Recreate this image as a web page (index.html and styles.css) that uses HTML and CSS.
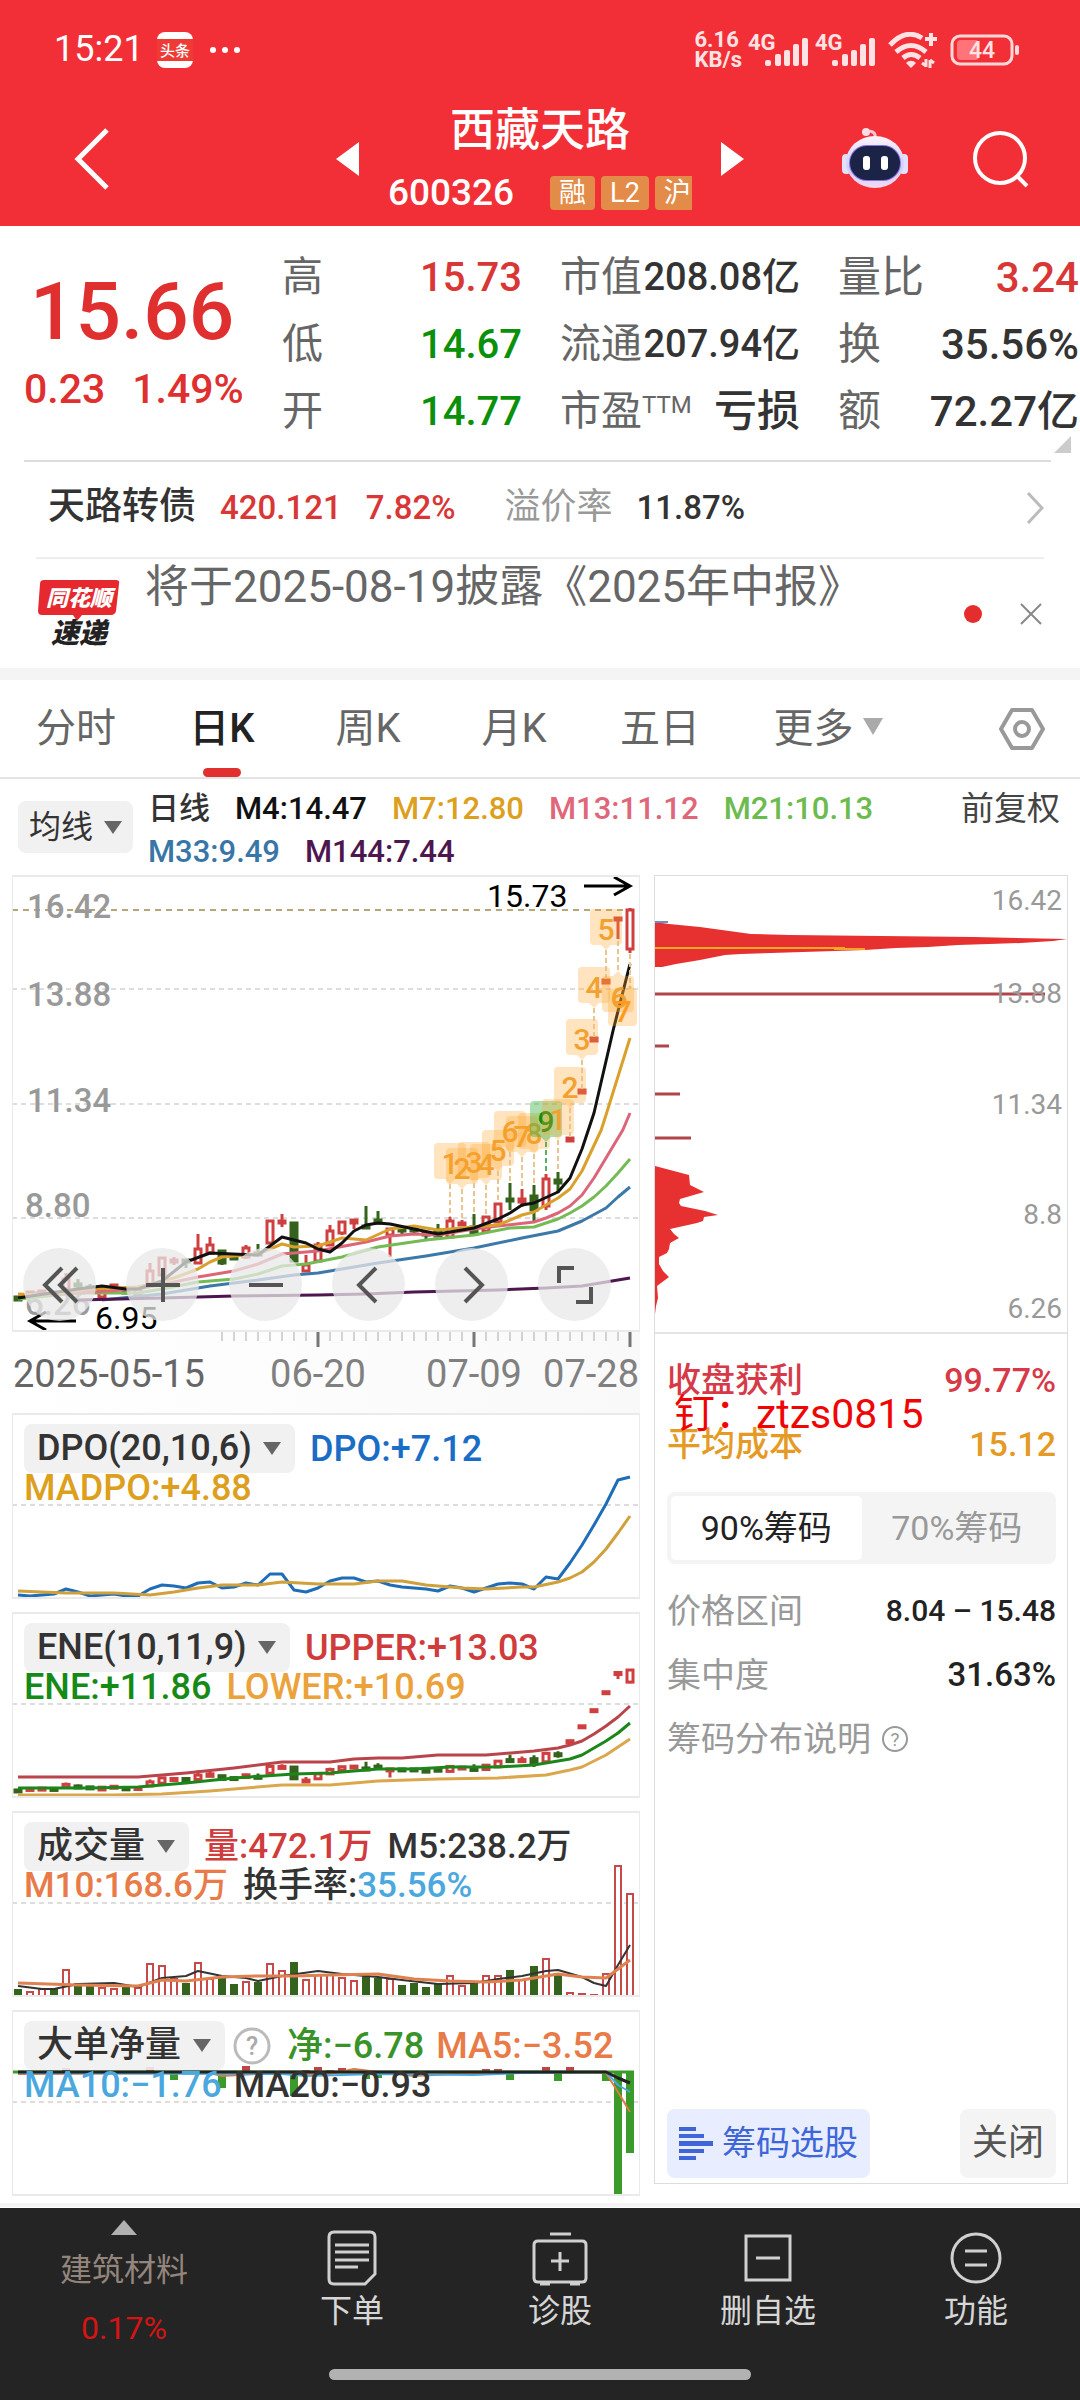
FILE: index.html
```html
<!DOCTYPE html>
<html lang="zh-CN">
<head>
    <meta charset="UTF-8">
    <meta name="viewport" content="width=device-width, initial-scale=1.0">
    <title>西藏天路 600326</title>
    <link rel="stylesheet" href="styles.css">
</head>
<body>
    <header class="header">
        <div class="status-bar">
            <span class="clock">15:21</span>
            <svg class="news-app" viewBox="0 0 36 36" width="36" height="36">
                <rect width="36" height="36" rx="8" fill="#fff"/>
                <rect y="7" width="36" height="22" fill="#ee3b36"/>
                <text x="18" y="24" text-anchor="middle" font-size="15" font-weight="500" fill="#fff">头条</text>
            </svg>
            <svg viewBox="0 0 32 8" width="32" height="8" fill="#fff">
                <circle cx="4" cy="4" r="3"/><circle cx="16" cy="4" r="3"/><circle cx="28" cy="4" r="3"/>
            </svg>
            <div class="status-icons">
                <span class="net-speed">6.16<br>KB/s</span>
                <svg viewBox="0 0 61 34" width="61" height="34" fill="#ffe3e4">
                    <text x="0" y="17" font-size="22" font-weight="700">4G</text>
                    <rect x="17" y="27" width="6" height="6" rx="2"/><rect x="27" y="21" width="6" height="12" rx="2"/><rect x="36" y="17" width="6" height="16" rx="2"/><rect x="45" y="11" width="6" height="22" rx="2"/><rect x="54" y="5" width="6" height="28" rx="2"/>
                </svg>
                <svg viewBox="0 0 61 34" width="61" height="34" fill="#ffe3e4">
                    <text x="0" y="17" font-size="22" font-weight="700">4G</text>
                    <rect x="17" y="27" width="6" height="6" rx="2"/><rect x="27" y="21" width="6" height="12" rx="2"/><rect x="36" y="17" width="6" height="16" rx="2"/><rect x="45" y="11" width="6" height="22" rx="2"/><rect x="54" y="5" width="6" height="28" rx="2"/>
                </svg>
                <svg class="wifi" viewBox="0 0 50 36" width="50" height="36" fill="none" stroke="#ffe3e4" stroke-width="5">
                    <path d="M2 13Q18-4 34 6M8 20Q23 7 38 20M15 26Q23 19 32 26"/>
                    <path d="M18 31a6 5 0 0 1 10 0l-5 5z" fill="#ffe3e4" stroke="none"/>
                    <path d="M43 1v13M37 7h12" stroke-width="4"/>
                    <path d="M38 27v8M38 34l-4-3M42 36V28M42 28l4 3" stroke-width="3"/>
                </svg>
                <svg viewBox="0 0 70 32" width="70" height="32">
                    <rect x="2" y="2" width="60" height="28" rx="8" fill="none" stroke="#ffd9da" stroke-width="3"/>
                    <rect x="7" y="6" width="22" height="20" rx="4" fill="#ff7379"/>
                    <rect x="65" y="11" width="4" height="10" rx="2" fill="#ffd9da"/>
                    <text x="32" y="24" text-anchor="middle" font-size="23" font-weight="500" fill="#ffe3e4">44</text>
                </svg>
            </div>
        </div>
        <div class="title-bar">
            <div class="title-left">
                <button class="icon-btn" aria-label="返回">
                    <svg viewBox="0 0 36 62" width="36" height="62" fill="none" stroke="#fff" stroke-width="5"><path d="M33 2L4 31l29 29"/></svg>
                </button>
                <button class="icon-btn" aria-label="上一只">
                    <svg viewBox="0 0 23 34" width="23" height="34" fill="#fff"><path d="M23 0v34L0 17z"/></svg>
                </button>
            </div>
            <div class="title-center">
                <h1>西藏天路</h1>
                <div class="code-row">
                    <span class="code">600326</span>
                    <span class="tags"><span class="tag">融</span><span class="tag">L2</span><span class="tag">沪</span></span>
                </div>
            </div>
            <div class="title-right">
                <button class="icon-btn" aria-label="下一只">
                    <svg viewBox="0 0 23 34" width="23" height="34" fill="#fff"><path d="M0 0v34l23-17z"/></svg>
                </button>
                <button class="icon-btn robot" aria-label="智能助手">
                    <svg viewBox="0 0 66 62" width="66" height="62">
                        <defs>
                            <linearGradient id="head" x1="0" y1="0" x2="0" y2="1">
                                <stop offset="0" stop-color="#fdf3fb"/><stop offset="0.6" stop-color="#cfcff8"/><stop offset="1" stop-color="#f3d9f0"/>
                            </linearGradient>
                        </defs>
                        <path d="M33 10c1-5-2-7-8-7" fill="none" stroke="#f6c9d8" stroke-width="3"/><circle cx="24" cy="4" r="4" fill="#fbdde6"/>
                        <rect x="0" y="26" width="9" height="20" rx="4" fill="#e3e0fb"/><rect x="57" y="26" width="9" height="20" rx="4" fill="#e3e0fb"/>
                        <ellipse cx="33" cy="34" rx="29" ry="26" fill="url(#head)"/>
                        <rect x="7" y="17" width="52" height="36" rx="18" fill="#8470e8"/>
                        <rect x="8" y="18" width="50" height="34" rx="17" fill="#1b2346"/>
                        <rect x="21" y="28" width="7" height="14" rx="3" fill="#fff"/><rect x="39" y="28" width="7" height="14" rx="3" fill="#fff"/>
                    </svg>
                </button>
                <button class="icon-btn" aria-label="搜索">
                    <svg viewBox="0 0 58 58" width="58" height="58" fill="none" stroke="#fff" stroke-width="4"><circle cx="28" cy="28" r="25"/><path d="M45 46l10 10"/></svg>
                </button>
            </div>
        </div>
    </header>

    <main>
        <section class="quote">
            <div class="quote-price">
                <strong>15.66</strong>
                <p><span>0.23</span><span>1.49%</span></p>
            </div>
            <dl class="quote-col">
                <div><dt>高</dt><dd class="up">15.73</dd></div>
                <div><dt>低</dt><dd class="down">14.67</dd></div>
                <div><dt>开</dt><dd class="down">14.77</dd></div>
            </dl>
            <dl class="quote-col mid">
                <div><dt>市值</dt><dd>208.08亿</dd></div>
                <div><dt>流通</dt><dd>207.94亿</dd></div>
                <div><dt>市盈<sup>TTM</sup></dt><dd class="loss">亏损</dd></div>
            </dl>
            <dl class="quote-col last">
                <div><dt>量比</dt><dd class="up">3.24</dd></div>
                <div><dt>换</dt><dd>35.56%</dd></div>
                <div><dt>额</dt><dd>72.27亿</dd></div>
            </dl>
            <span class="quote-corner"></span>
        </section>

        <a class="bond" href="#">
            <span class="bond-name">天路转债</span>
            <span class="up">420.121</span>
            <span class="up">7.82%</span>
            <span class="bond-label">溢价率</span>
            <span>11.87%</span>
            <svg viewBox="0 0 18 34" width="18" height="34" fill="none" stroke="#bbb" stroke-width="3"><path d="M2 2l14 15L2 32"/></svg>
        </a>

        <section class="notice">
            <svg class="notice-logo" viewBox="0 0 82 68" width="82" height="68">
                <path d="M6 0h72q4 0 3 4l-3 27q-1 4-5 4H44l-5 6-4-6H4q-4 0-4-4L2 4q0-4 4-4z" fill="#e5292f"/>
                <text x="41" y="26" text-anchor="middle" font-size="22" font-weight="900" font-style="italic" fill="#fff">同花顺</text>
                <text x="41" y="63" text-anchor="middle" font-size="28" font-weight="900" font-style="italic" fill="#222">速递</text>
            </svg>
            <p>将于2025-08-19披露《2025年中报》</p>
            <span class="dot"></span>
            <button class="icon-btn" aria-label="关闭公告">
                <svg viewBox="0 0 22 22" width="22" height="22" stroke="#888" stroke-width="2"><path d="M1 1l20 20M21 1L1 21"/></svg>
            </button>
        </section>

        <nav class="tabs">
            <button>分时</button>
            <button class="active">日K</button>
            <button>周K</button>
            <button>月K</button>
            <button>五日</button>
            <button>更多<i class="caret"></i></button>
            <button class="settings" aria-label="设置">
                <svg viewBox="0 0 46 44" width="46" height="44" fill="none" stroke="#999" stroke-width="4"><path d="M13 3h20l11 19-11 19H13L2 22z" stroke-linejoin="round"/><circle cx="23" cy="22" r="7"/></svg>
            </button>
        </nav>

        <section class="ma-bar">
            <span class="picker"><select aria-label="主图指标"><option>均线</option></select></span>
            <div class="ma-legend">
                <span class="c-dark">日线</span>
                <span class="c-black">M4:14.47</span>
                <span class="c-gold">M7:12.80</span>
                <span class="c-pink">M13:11.12</span>
                <span class="c-lime">M21:10.13</span>
                <span class="c-blue">M33:9.49</span>
                <span class="c-purple">M144:7.44</span>
            </div>
            <a class="adjust" href="#">前复权</a>
        </section>

        <div class="board">
            <div class="charts">
                <section class="panel">
                    <svg id="kline" class="chart" viewBox="1 2 626 453">
                        <path d="M0 114h628M0 229h628M0 343h628" class="grid-line"/>
                        <path d="M0 35h628" stroke="#b5a67c" stroke-width="2" stroke-dasharray="6 5"/>
                        <g class="axis">
                            <text x="15" y="43">16.42</text>
                            <text x="15" y="131">13.88</text>
                            <text x="15" y="237">11.34</text>
                            <text x="13" y="342">8.80</text>
                            <text x="13" y="440">6.26</text>
                        </g>
                        <g class="extreme">
                            <text x="475" y="32">15.73</text>
                            <path d="M572 11h45M602 2l16 9-16 9"/>
                            <text x="83" y="454">6.95</text>
                            <path d="M64 446H18M34 437l-16 9 16 9"/>
                        </g>
                    </svg>
                    <div class="tools">
                        <button aria-label="最早"><svg viewBox="0 0 40 40" width="40" height="40"><path d="M22 3L5 20l17 17M37 3L20 20l17 17"/></svg></button>
                        <button aria-label="放大"><svg viewBox="0 0 40 40" width="40" height="40"><path d="M20 3v34M3 20h34"/></svg></button>
                        <button aria-label="缩小"><svg viewBox="0 0 40 40" width="40" height="40"><path d="M3 20h34"/></svg></button>
                        <button aria-label="左移"><svg viewBox="0 0 40 40" width="40" height="40"><path d="M27 3L10 20l17 17"/></svg></button>
                        <button aria-label="右移"><svg viewBox="0 0 40 40" width="40" height="40"><path d="M13 3l17 17-17 17"/></svg></button>
                        <button aria-label="全屏"><svg viewBox="0 0 40 40" width="40" height="40"><path d="M4 18V3h15M36 22v15H21"/></svg></button>
                    </div>
                </section>

                <svg id="dates" class="dates" viewBox="0 0 628 81">
                    <g font-size="38">
                        <text x="1" y="55" fill="#666">2025-05-15</text>
                        <text x="306" y="55" text-anchor="middle">06-20</text>
                        <text x="462" y="55" text-anchor="middle">07-09</text>
                        <text x="627" y="55" text-anchor="end">07-28</text>
                    </g>
                </svg>

                <section class="panel">
                    <svg id="dpo" class="chart" viewBox="1 2 626 182"><path d="M0 92h628" class="grid-line"/></svg>
                    <div class="legend">
                        <span class="picker"><select aria-label="副图指标一"><option>DPO(20,10,6)</option></select></span>
                        <span class="c-dpo">DPO:+7.12</span>
                        <i class="break"></i>
                        <span class="c-gold">MADPO:+4.88</span>
                    </div>
                </section>

                <section class="panel">
                    <svg id="ene" class="chart" viewBox="1 2 626 182"><path d="M0 92h628" class="grid-line"/></svg>
                    <div class="legend">
                        <span class="picker"><select aria-label="副图指标二"><option>ENE(10,11,9)</option></select></span>
                        <span class="c-red">UPPER:+13.03</span>
                        <i class="break"></i>
                        <span class="c-green">ENE:+11.86</span>
                        <span class="c-amber">LOWER:+10.69</span>
                    </div>
                </section>

                <section class="panel">
                    <svg id="volume" class="chart" viewBox="1 2 626 182"><path d="M0 92h628" class="grid-line"/></svg>
                    <div class="legend volume-legend">
                        <span class="picker"><select aria-label="副图指标三"><option>成交量</option></select></span>
                        <span class="c-red">量:472.1万</span>
                        <span class="c-dark">M5:238.2万</span>
                        <i class="break"></i>
                        <span class="c-orange">M10:168.6万</span>
                        <span class="c-dark">换手率:<b class="c-sky">35.56%</b></span>
                    </div>
                </section>

                <section class="panel">
                    <svg id="netflow" class="chart" viewBox="1 2 626 182"><path d="M0 92h628" class="grid-line"/></svg>
                    <div class="legend tight">
                        <span class="picker"><select aria-label="副图指标四"><option>大单净量</option></select></span>
                        <button class="icon-btn help" aria-label="说明">
                            <svg viewBox="0 0 38 38" width="38" height="38"><circle cx="19" cy="19" r="17" fill="none" stroke="#bbb" stroke-width="3"/><text x="19" y="28" text-anchor="middle" font-size="25" fill="#aaa">?</text></svg>
                        </button>
                        <span class="c-leaf">净:−6.78</span>
                        <span class="c-orange">MA5:−3.52</span>
                        <i class="break"></i>
                        <span class="c-sky">MA10:−1.76</span>
                        <span class="c-dark">MA20:−0.93</span>
                    </div>
                </section>
            </div>

            <aside class="chips">
                <svg class="chip-chart" viewBox="0 0 412 456">
                    <path fill="#e73030" d="M0 46L14 48 45 51 96 58 134 59 226 60 319 61 412 63 398 65 366 67 334 68 303 69 273 71 241 72 210 74 180 75 148 76 116 77 86 78 70 79 45 84 21 88 7 91H0z"/>
                    <path fill="#e73030" d="M0 290L34 299 35 309 49 316 25 323 24 327 26 330 50 335 63 339 49 341 48 345 42 347 15 353 19 358 24 362 15 367 14 373 12 377 4 381 4 388 8 395 14 401 6 407 2 410 3 422 1 430 0 438z"/>
                    <path d="M0 46h13" stroke="#6a8fc8" stroke-width="2"/>
                    <path d="M0 72h190M179 73h31" stroke="#f5a623" stroke-width="2"/>
                    <path d="M0 118h390M0 170h14M0 218h25M0 262h36" stroke="#b0464b" stroke-width="3"/>
                    <g font-size="28" fill="#999" text-anchor="end">
                        <text x="407" y="34">16.42</text>
                        <text x="407" y="127">13.88</text>
                        <text x="407" y="238">11.34</text>
                        <text x="407" y="348">8.8</text>
                        <text x="407" y="442">6.26</text>
                    </g>
                </svg>
                <div class="chip-info">
                    <div class="chip-row c-crimson"><span>收盘获利</span><span>99.77%</span></div>
                    <div class="chip-row c-cost"><span>平均成本</span><span>15.12</span></div>
                    <span class="watermark">钉：ztzs0815</span>
                    <div class="switch">
                        <button class="active">90%筹码</button>
                        <button>70%筹码</button>
                    </div>
                    <div class="chip-row"><span>价格区间</span><b class="range">8.04 – 15.48</b></div>
                    <div class="chip-row"><span>集中度</span><b>31.63%</b></div>
                    <a class="chip-help" href="#">筹码分布说明
                        <svg viewBox="0 0 28 28" width="28" height="28"><circle cx="14" cy="14" r="12" fill="none" stroke="#999" stroke-width="2"/><text x="14" y="21" text-anchor="middle" font-size="19" fill="#999">?</text></svg>
                    </a>
                </div>
                <div class="chip-actions">
                    <button class="pick">
                        <svg viewBox="0 0 34 34" width="34" height="34" fill="#3f66d8"><path d="M0 0h17v4H0zM0 7h25v4H0zM0 14h34v5H0zM0 22h25v4H0zM0 29h17v4H0z"/></svg>
                        筹码选股
                    </button>
                    <button class="close">关闭</button>
                </div>
            </aside>
        </div>
    </main>

    <footer class="footer">
        <nav>
            <a class="industry" href="#"><i></i><span>建筑材料</span><em>0.17%</em></a>
            <a href="#">
                <svg viewBox="0 0 56 56" width="56" height="56"><path d="M10 2h36q5 0 5 5v37L41 54H10q-5 0-5-5V7q0-5 5-5zM11 15h34M11 22h34M11 30h34M11 37h23"/></svg>
                下单
            </a>
            <a href="#">
                <svg viewBox="0 0 56 56" width="56" height="56"><path d="M6 11h44q4 0 4 4v33q0 4-4 4H6q-4 0-4-4V15q0-4 4-4zM18 4h21M28 22v19M19 31h18M8 54h10M38 54h10"/></svg>
                诊股
            </a>
            <a href="#">
                <svg viewBox="0 0 56 56" width="56" height="56"><path d="M6 6h44v44H6zM16 28h24"/></svg>
                删自选
            </a>
            <a href="#">
                <svg viewBox="0 0 56 56" width="56" height="56"><circle cx="28" cy="28" r="24"/><path d="M17 21h22M17 35h22"/></svg>
                功能
            </a>
        </nav>
        <span class="home-bar"></span>
    </footer>

    <script src="chart.js"></script>
</body>
</html>
```
FILE: styles.css
```css
* {
    box-sizing: border-box;
}
body {
    margin: 0;
    background: #fff;
    color: #333;
    font-family: Roboto, "Noto Sans CJK SC", sans-serif;
    font-size: 34px;
    line-height: 1.2;
    min-height: 100vh;
    display: flex;
    flex-direction: column;
}
main {
    flex: 1;
}
h1, p, dl, dd {
    margin: 0;
}
a {
    color: inherit;
    text-decoration: none;
}
button, select {
    font: inherit;
    color: inherit;
    background: none;
    border: none;
    padding: 0;
    cursor: pointer;
}
svg {
    display: block;
}
.icon-btn {
    display: flex;
}
.up {
    color: #d93636;
}
.down {
    color: #0a900a;
}

/* header */
.header {
    background: #f22f37;
    color: #fff;
}
.status-bar {
    display: flex;
    align-items: center;
    height: 100px;
    padding: 0 60px 0 54px;
}
.clock {
    font-size: 36px;
    font-weight: 400;
}
.news-app {
    margin: 0 16px 0 13px;
}
.status-icons {
    display: flex;
    align-items: center;
    gap: 6px;
    margin-left: auto;
}
.wifi {
    margin: 0 6px;
}
.net-speed {
    font-size: 22px;
    line-height: 20px;
    font-weight: 700;
    color: #ffe3e4;
}
.title-bar {
    display: grid;
    grid-template-columns: 1fr 362px 1fr;
    height: 126px;
}
.title-left, .title-right {
    display: flex;
    align-items: center;
    justify-content: space-between;
    padding-bottom: 8px;
}
.title-left {
    padding-left: 74px;
}
.title-right {
    padding-right: 50px;
}
.robot {
    margin-left: 34px;
}
.title-center {
    display: flex;
    flex-direction: column;
    align-items: center;
}
h1 {
    font-size: 45px;
    font-weight: 500;
    line-height: 62px;
}
.code-row {
    display: flex;
    align-items: center;
    gap: 36px;
    margin-top: 11px;
}
.code {
    font-size: 37px;
    font-weight: 500;
    line-height: 40px;
}
.tags {
    display: flex;
    gap: 6px;
    width: 142px;
    overflow: hidden;
}
.tag {
    flex: none;
    background: #e38c49;
    border-radius: 4px;
    padding: 0 9px;
    font-size: 27px;
    line-height: 34px;
}

/* quote */
.quote {
    position: relative;
    display: flex;
    height: 236px;
    padding: 18px 0 0 24px;
    font-weight: 500;
}
.quote::after {
    content: "";
    position: absolute;
    left: 24px;
    right: 29px;
    bottom: 0;
    border-bottom: 2px solid #ddd;
}
.quote-price {
    width: 258px;
    padding-top: 22px;
    color: #e02f2f;
}
.quote-price strong {
    display: block;
    margin-left: 6px;
    font-size: 80px;
    font-weight: 500;
    line-height: 92px;
}
.quote-price p {
    display: flex;
    gap: 27px;
    font-size: 41px;
    line-height: 62px;
}
.quote-col {
    width: 240px;
    margin-right: 38px;
}
.quote-col.last {
    flex: 1;
    margin-right: 1px;
}
.quote-col div {
    display: flex;
    justify-content: space-between;
    line-height: 67px;
    white-space: nowrap;
}
.quote-col dt {
    font-size: 41px;
    font-weight: 400;
    color: #666;
}
.quote-col dd {
    font-size: 40px;
}
.quote-col.mid dd {
    font-size: 38px;
}
.quote-col.mid .loss {
    font-size: 43px;
}
.quote-col.last dt {
    font-size: 43px;
}
.quote-col.last dd {
    font-size: 42px;
}
.quote-col sup {
    font-size: 24px;
    line-height: 24px;
    vertical-align: 12px;
}
.quote-corner {
    position: absolute;
    right: 9px;
    bottom: 9px;
    border-left: 17px solid transparent;
    border-bottom: 17px solid #ccc;
}

/* bond and notice */
.bond {
    display: flex;
    align-items: center;
    gap: 24px;
    height: 97px;
    margin: 0 36px;
    padding: 0 0 4px 12px;
    border-bottom: 2px solid #eee;
    font-size: 33px;
    font-weight: 500;
}
.bond-name {
    font-size: 37px;
}
.bond-label {
    margin-left: 25px;
    font-size: 36px;
    font-weight: 400;
    color: #999;
}
.bond svg {
    margin-left: auto;
}
.notice {
    display: flex;
    align-items: center;
    height: 121px;
    padding: 0 38px;
    border-bottom: 12px solid #f4f4f4;
}
.notice p {
    flex: 1;
    margin-left: 25px;
    padding-bottom: 54px;
    font-size: 44px;
    line-height: 54px;
    white-space: nowrap;
    color: #666;
}
.dot {
    width: 18px;
    height: 18px;
    margin-right: 38px;
    border-radius: 50%;
    background: #e62d2d;
}

/* tabs */
.tabs {
    display: flex;
    height: 99px;
    padding: 0 35px 0 3px;
    border-bottom: 2px solid #e4e4e4;
}
.tabs button {
    position: relative;
    width: 146px;
    font-size: 40px;
    color: #666;
}
.tabs .active {
    font-weight: 500;
    color: #222;
}
.tabs .active::after {
    content: "";
    position: absolute;
    left: 54px;
    right: 54px;
    bottom: 0;
    height: 9px;
    border-radius: 5px;
    background: #e13030;
}
.tabs button:nth-child(6) {
    width: 190px;
}
.caret {
    display: inline-block;
    margin: 0 0 7px 9px;
    border: 10px solid transparent;
    border-top: 17px solid #aaa;
    border-bottom: none;
}
.tabs .settings {
    display: flex;
    align-items: center;
    justify-content: flex-end;
    width: auto;
    margin-left: auto;
}

/* moving average bar */
.ma-bar {
    display: flex;
    align-items: flex-start;
    height: 96px;
    padding: 8px 20px 0 18px;
    font-size: 32px;
    line-height: 43px;
}
.picker {
    position: relative;
    display: inline-flex;
    border-radius: 8px;
    background: rgba(240, 240, 240, 0.9);
}
.picker select {
    appearance: none;
    padding: 0 43px 0 13px;
    height: 49px;
    line-height: 49px;
    color: #333;
}
.picker::after {
    content: "";
    position: absolute;
    right: 14px;
    top: 18px;
    border: 9px solid transparent;
    border-top: 13px solid #666;
    border-bottom: none;
    pointer-events: none;
}
.ma-bar .picker {
    margin-top: 14px;
}
.ma-bar .picker::after {
    right: 11px;
    top: 20px;
}
.ma-bar .picker select {
    padding: 0 39px 0 11px;
    height: 52px;
}
.ma-legend {
    flex: 1;
    display: flex;
    flex-wrap: wrap;
    column-gap: 25px;
    margin: 0 60px 0 15px;
    font-size: 31px;
    font-weight: 500;
}
.adjust {
    font-size: 33px;
    color: #444;
}
.c-dark { color: #333; }
.c-black { color: #111; }
.c-gold { color: #dd9f1e; }
.c-pink { color: #e0667a; }
.c-lime { color: #6cbb4e; }
.c-blue { color: #3776a6; }
.c-purple { color: #4d164f; }
.c-dpo { color: #1a6dc6; }
.c-red { color: #d03b3b; }
.c-green { color: #168a16; }
.c-amber { color: #eba23a; }
.c-orange { color: #e87b48; }
.c-sky { color: #4ba8de; }
.c-leaf { color: #3a9329; }

/* board */
.board {
    display: grid;
    grid-template-columns: 628fr 414fr;
    gap: 14px;
    padding: 0 12px 7px;
    border-bottom: 4px solid #f4f4f4;
}
.panel {
    position: relative;
    margin-bottom: 13px;
    border: 2px solid #eaeaea;
    border-width: 2px 1px;
}
.panel:first-child, .panel:last-child {
    margin-bottom: 0;
}
.chart, .dates, .chip-chart {
    width: 100%;
    height: auto;
}
.grid-line {
    stroke: #ddd;
    stroke-width: 2;
    stroke-dasharray: 5 4;
}
.axis {
    font-size: 33px;
    font-weight: 500;
    fill: #999;
}
.extreme {
    font-size: 32px;
    fill: #000;
}
.extreme path {
    fill: none;
    stroke: #000;
    stroke-width: 3;
}
.tools {
    position: absolute;
    left: 10px;
    right: 28px;
    bottom: 9px;
    display: flex;
    justify-content: space-between;
}
.tools button {
    display: flex;
    align-items: center;
    justify-content: center;
    width: 73px;
    height: 73px;
    border-radius: 50%;
    background: rgba(232, 232, 232, 0.75);
}
.tools svg {
    fill: none;
    stroke: #555;
    stroke-width: 4;
}
.dates {
    background: linear-gradient(90deg, #fff, #f9f9f9);
    fill: #808080;
}
.legend {
    position: absolute;
    left: 11px;
    top: 9px;
    right: 0;
    display: flex;
    flex-wrap: wrap;
    align-items: center;
    column-gap: 15px;
    font-size: 36px;
    font-weight: 500;
    line-height: 30px;
}
.volume-legend > .c-red, .volume-legend > .c-dark, .volume-legend > .c-orange {
    font-size: 35px;
}
.legend.tight {
    column-gap: 12px;
}
.legend b {
    font-weight: 500;
}
.break {
    width: 100%;
}
.help {
    margin: 0 4px 0 -4px;
}

/* chip distribution */
.chips {
    display: flex;
    flex-direction: column;
    margin-bottom: 12px;
    border: 1px solid #ddd;
}
.chip-chart {
    border-bottom: 2px solid #e4e4e4;
}
.chip-info {
    position: relative;
    flex: 1;
    padding: 14px 11px 0 12px;
    color: #999;
}
.chip-row {
    display: flex;
    justify-content: space-between;
    line-height: 64px;
}
.chip-row.c-crimson {
    color: #d63a48;
    font-weight: 500;
}
.chip-row.c-cost {
    color: #e59a25;
    font-weight: 500;
}
.chip-row b {
    font-size: 33px;
    font-weight: 500;
    color: #222;
}
.chip-row .range {
    font-size: 30px;
}
.watermark {
    position: absolute;
    left: 19px;
    top: 56px;
    font-size: 41px;
    line-height: 48px;
    color: #f00505;
}
.switch {
    display: flex;
    height: 72px;
    margin: 16px 0 15px;
    padding: 4px;
    border-radius: 8px;
    background: #f4f4f4;
}
.switch button {
    flex: 1;
    border-radius: 5px;
}
.switch .active {
    background: #fff;
    color: #222;
}
.chip-help {
    display: flex;
    align-items: center;
    gap: 10px;
    line-height: 64px;
}
.chip-actions {
    display: flex;
    justify-content: space-between;
    padding: 0 11px 5px 12px;
}
.chip-actions button {
    display: flex;
    align-items: center;
    gap: 9px;
    height: 69px;
    padding: 0 12px;
    border-radius: 8px;
}
.chip-actions .pick {
    background: #e8eeff;
    color: #3f66d8;
}
.chip-actions .close {
    background: #f4f4f4;
    color: #555;
    font-size: 36px;
}

/* footer */
.footer {
    background: #242424;
    color: #d6d6d6;
    padding-bottom: 20px;
}
.footer nav {
    display: flex;
    height: 161px;
    font-size: 32px;
    line-height: 40px;
}
.footer a {
    flex: 208;
    display: flex;
    flex-direction: column;
    align-items: center;
    gap: 5px;
    padding-top: 22px;
}
.footer svg {
    fill: none;
    stroke: #d0d0d0;
    stroke-width: 3;
}
.footer .industry {
    flex: 248;
    gap: 0;
    padding-top: 12px;
    color: #93857c;
}
.industry i {
    border: 13px solid transparent;
    border-top: none;
    border-bottom: 15px solid #b0b0b0;
}
.industry span {
    margin: 15px 0 18px;
}
.industry em {
    font-style: normal;
    color: #d51414;
}
.home-bar {
    display: block;
    width: 39%;
    height: 11px;
    margin: 0 auto;
    border-radius: 6px;
    background: #b2b2b2;
}
```
FILE: chart.js
```js
const NS = "http://www.w3.org/2000/svg";
const RED = "#cf3f3f";
const GREEN = "#35631d";

const xAt = i => 6 + i * 12;

function add(id, tag, attrs, text) {
    const el = document.createElementNS(NS, tag);
    for (const key in attrs) {
        el.setAttribute(key, attrs[key]);
    }
    if (text) {
        el.textContent = text;
    }
    document.getElementById(id).appendChild(el);
}

function line(id, color, points, width = 3) {
    const path = points.map(([i, y]) => xAt(i) + "," + y).join(" ");
    add(id, "polyline", { points: path, fill: "none", stroke: color, "stroke-width": width, "stroke-linejoin": "round" });
}

// direction, high, body top, body bottom, low
const candles = [
    ["g", 421, 422, 425, 426], ["r", 417, 417, 421, 421], ["r", 416, 416, 419, 419], ["g", 417, 417, 420, 420],
    ["r", 398, 404, 414, 414], ["g", 404, 409, 411, 413], ["g", 409, 412, 415, 418], ["r", 413, 413, 422, 422],
    ["r", 410, 410, 413, 413], ["g", 415, 415, 418, 418], ["r", 414, 414, 420, 420], ["r", 388, 396, 409, 409],
    ["r", 382, 383, 400, 400], ["r", 382, 385, 387, 390], ["g", 385, 385, 387, 393], ["r", 359, 374, 388, 388],
    ["r", 362, 370, 378, 380], ["g", 375, 376, 388, 390], ["g", 381, 382, 384, 385], ["r", 370, 373, 382, 384],
    ["g", 369, 378, 380, 380], ["r", 345, 346, 368, 368], ["r", 339, 346, 348, 352], ["g", 348, 348, 386, 387],
    ["r", 380, 390, 396, 396], ["r", 367, 370, 386, 386], ["r", 350, 356, 370, 370], ["r", 346, 347, 358, 360],
    ["r", 344, 345, 348, 354], ["g", 331, 351, 353, 353], ["g", 336, 345, 348, 348], ["r", 353, 354, 360, 382],
    ["g", 353, 354, 356, 361], ["g", 354, 354, 356, 359], ["g", 358, 358, 360, 364], ["g", 349, 355, 361, 361],
    ["r", 342, 346, 362, 362], ["r", 345, 348, 350, 351], ["g", 339, 352, 359, 359], ["r", 341, 342, 356, 359],
    ["r", 328, 329, 347, 347], ["g", 308, 324, 326, 335], ["r", 314, 324, 327, 332], ["g", 310, 321, 335, 348],
    ["r", 299, 304, 331, 335], ["g", 297, 305, 308, 318], ["r", 263, 263, 266, 266], ["r", 215, 215, 218, 218],
    ["r", 163, 163, 166, 166], ["r", 105, 105, 108, 108], ["r", 43, 43, 45, 64], ["r", 33, 35, 74, 78]
];

function drawCandles(id, map) {
    candles.forEach(([dir, high, top, bottom, low], i) => {
        const color = dir === "r" ? RED : GREEN;
        const y = map(top);
        const h = Math.max(map(bottom) - y, 2);
        const x = xAt(i);
        add(id, "path", { d: `M${x} ${map(high)}V${y}M${x} ${y + h}V${map(low)}`, stroke: color, "stroke-width": 3 });
        add(id, "rect", { x: x - 3, y: y, width: 6, height: h, fill: dir === "r" ? "#fff" : color, stroke: color, "stroke-width": 3 });
    });
}

drawCandles("kline", y => y);

line("kline", "#3c78a8", [[7, 425], [12, 419], [16, 411], [20, 405], [23, 400], [25, 398], [30, 388], [34, 381], [38, 373], [42, 363], [45, 356], [47, 346], [49, 333], [50, 322], [51, 312]]);
line("kline", "#4d164f", [[5, 425], [12, 423], [18, 421], [25, 420], [29, 419], [33, 417], [40, 415], [44, 413], [47, 411], [49, 407], [51, 403]]);
line("kline", "#74bb55", [[0, 424], [5, 418], [10, 418], [12, 414], [15, 407], [18, 404], [20, 399], [22, 391], [24, 389], [27, 382], [30, 372], [34, 365], [38, 360], [41, 353], [43, 352], [45, 344], [46, 338], [47, 331], [48, 322], [49, 311], [50, 298], [51, 284]]);
line("kline", "#dd6578", [[0, 420], [5, 418], [10, 414], [13, 407], [15, 402], [18, 396], [20, 389], [22, 379], [25, 376], [29, 367], [31, 361], [33, 359], [35, 360], [38, 354], [40, 351], [43, 347], [44, 343], [45, 338], [46, 331], [47, 320], [48, 303], [49, 283], [50.4, 255], [51, 238]]);
line("kline", "#d9a02c", [[0, 419], [2, 420], [6, 414], [10, 412], [13, 403], [15, 394], [16, 387], [17, 382], [20, 379], [22, 369], [23, 372], [25, 371], [27, 363], [29, 365], [31, 354], [33, 351], [35, 355], [37, 353], [40, 350], [42, 340], [43, 337], [45, 323], [46, 314], [47, 296], [48.6, 255], [49, 240], [51, 163]]);
line("kline", "#111", [[0, 423], [5, 414], [7, 411], [9, 414], [10, 414], [12, 406], [14, 387], [16, 378], [20, 380], [22, 362], [24, 368], [25, 374], [26, 377], [27, 368], [28, 356], [29, 350], [30, 348], [31, 349], [33, 354], [35, 359], [38, 353], [40, 344], [41, 338], [42, 330], [43, 328], [45, 317], [46, 303], [47, 274], [48, 238], [49.6, 155], [51, 89]]);

// sequence marks: candle index, badge top, number, end of the dashed leader
const marks = [
    [36, 268, 1, 342], [37, 273, 2, 345], [38, 267, 3, 339], [39, 269, 4, 341], [40, 255, 5, 328],
    [41, 236, 6, 308], [42, 241, 7, 314], [43, 238, 8, 310], [44, 226, 9, 299], [45, 224, 1, 297],
    [46, 192, 2, 263], [47, 144, 3, 215], [48, 92, 4, 163], [49, 34, 5, 105]
];
marks.forEach(([i, top, n, end]) => {
    const x = xAt(i);
    const green = n === 9;
    const bottom = top + 36;
    add("kline", "path", { d: `M${x} ${top + 41}V${end}`, stroke: green ? "#5fae66" : "#e9c48c", "stroke-width": 2, "stroke-dasharray": "5 3" });
    add("kline", "path", { d: `M${x - 16} ${top + 4}q0-4 4-4h24q4 0 4 4V${bottom - 4}q0 4-4 4h-7l-5 5-5-5h-7q-4 0-4-4z`, fill: green ? "#3cb043" : "#ffa52c", opacity: green ? 0.42 : 0.3 });
    add("kline", "text", { x: x, y: top + 31, "text-anchor": "middle", "font-size": 30, "font-weight": 500, fill: green ? "#0e8f12" : "#f2a02e" }, String(n));
});
add("kline", "path", { d: "M606 66V96M618 79V114", stroke: "#e9c48c", "stroke-width": 2, "stroke-dasharray": "5 3" });
add("kline", "path", { d: "M590 105q0-4 4-4h7l5-5 5 5h7q4 0 4 4v28q0 4-4 4h-24q-4 0-4-4z", fill: "#ffa52c", opacity: 0.3 });
add("kline", "path", { d: "M596 118q0-4 4-4h14l4-5 4 5q3 0 3 4v29q0 4-4 4h-21q-4 0-4-4z", fill: "#ffa52c", opacity: 0.3 });
add("kline", "text", { x: 607, y: 133, "text-anchor": "middle", "font-size": 30, "font-weight": 500, fill: "#f2a02e" }, "6");
add("kline", "text", { x: 611, y: 147, "text-anchor": "middle", "font-size": 30, "font-weight": 500, fill: "#ff9a1c" }, "7");

// date ticks
for (let i = 17; i < 52; i++) {
    const major = i === 25 || i === 38 || i === 51;
    add("dates", "path", { d: `M${xAt(i)} 0V${major ? 15 : 9}`, stroke: major ? "#777" : "#aaa", "stroke-width": major ? 3 : 1 });
}

line("dpo", "#1f6db8", [[0, 182], [1, 183], [3, 181], [4, 176], [5, 179], [6, 183], [8, 181], [9, 183], [10, 183], [11, 176], [12, 172], [13, 173], [14, 175], [15, 170], [16, 169], [17, 175], [18, 174], [19, 170], [20, 172], [21, 161], [22, 161], [23, 177], [24, 179], [25, 175], [26, 168], [27, 165], [28, 165], [29, 169], [30, 168], [31, 172], [32, 174], [33, 175], [34, 176], [35, 178], [36, 173], [37, 175], [38, 179], [39, 175], [40, 171], [41, 170], [42, 171], [43, 176], [44, 164], [45, 166], [46, 150], [47, 132], [48, 112], [49, 91], [50, 67], [51, 64]]);
line("dpo", "#d0a03a", [[0, 178], [4, 180], [8, 180], [11, 182], [13, 179], [15, 175], [17, 172], [20, 172], [22, 169], [25, 171], [28, 171], [30, 168], [32, 168], [34, 172], [37, 175], [39, 176], [42, 174], [43, 174], [45, 169], [46, 165], [47, 159], [48, 149], [49, 136], [50, 120], [51, 103]]);

drawCandles("ene", y => 129 + (y - 264) * 0.31);
line("ene", "#b9454b", [[0, 165], [5, 165], [10, 165], [14, 161], [18, 156], [22, 150], [26, 150], [28, 147], [30, 146], [32, 146], [35, 143], [39, 143], [43, 139], [45, 136], [46, 133], [47, 129], [48, 122], [49, 114], [50, 105], [51, 94]]);
line("ene", "#1b871b", [[0, 176], [6, 176], [10, 175], [14, 171], [18, 166], [23, 162], [26, 161], [30, 157], [33, 157], [36, 155], [40, 155], [43, 153], [45, 149], [46, 147], [47, 143], [48, 136], [49, 129], [50, 121], [51, 111]]);
line("ene", "#dba74c", [[0, 183], [8, 183], [12, 182], [16, 179], [19, 176], [22, 173], [26, 173], [30, 169], [35, 167], [40, 166], [44, 163], [46, 158], [47, 155], [48, 149], [49, 143], [50, 135], [51, 127]]);

const volumes = [6, 4, 7, 7, 26, 12, 12, 8, 7, 8, 8, 32, 30, 17, 12, 33, 17, 19, 11, 14, 13, 32, 25, 33, 16, 21, 21, 18, 15, 20, 17, 17, 10, 12, 8, 12, 20, 10, 13, 20, 20, 25, 16, 29, 37, 22, 3, 2, 1, 22, 130, 102];
volumes.forEach((v, i) => {
    const red = candles[i][0] === "r";
    add("volume", "rect", { x: xAt(i) - 3, y: 185 - v, width: 6, height: v, fill: red ? "#fff" : GREEN, stroke: red ? "#c64a4a" : GREEN, "stroke-width": 2 });
});
line("volume", "#333", [[0, 175], [2, 178], [3, 178], [5, 173], [8, 172], [10, 176], [12, 167], [14, 165], [15, 160], [17, 165], [19, 167], [20, 170], [22, 165], [25, 160], [27, 163], [30, 166], [32, 169], [35, 173], [38, 172], [40, 168], [42, 165], [44, 160], [45, 159], [47, 166], [48, 172], [49, 175], [50, 154], [51, 134]], 2);
line("volume", "#e08150", [[0, 172], [5, 174], [10, 175], [12, 169], [14, 170], [17, 166], [20, 165], [23, 165], [26, 164], [30, 163], [33, 168], [36, 170], [39, 171], [42, 169], [45, 163], [47, 166], [49, 167], [50, 158], [51, 149]]);

// net flow bars run from the zero line at y = 62
const flows = { 4: -4, 11: -5, 13: 8, 17: 16, 19: -6, 23: 24, 24: -2, 25: -5, 26: -2, 27: -4, 29: 7, 30: 6, 39: -3, 40: -3, 41: 8, 44: -5, 45: 9, 46: -5, 49: 9, 50: 122, 51: 81 };
for (const i in flows) {
    const v = flows[i];
    add("netflow", "rect", { x: xAt(+i) - 4, y: v < 0 ? 62 + v : 62, width: 8, height: Math.abs(v), fill: v < 0 ? "#c04444" : "#3a9a2a" });
}
add("netflow", "path", { d: "M0 62H622", stroke: "#3a9a2a", "stroke-width": 3 });
line("netflow", "#d97b45", [[0, 64], [16, 63], [17, 66], [20, 64], [26, 64], [28, 59], [30, 62], [33, 66], [38, 63], [48, 62], [49, 63], [50, 82], [51, 102]], 2);
line("netflow", "#4ba8de", [[0, 63], [22, 64], [24, 66], [30, 64], [38, 65], [42, 63], [49, 62], [50, 75], [51, 82]], 2);
line("netflow", "#222", [[0, 62], [49, 62], [50, 68], [51, 73]]);
```
